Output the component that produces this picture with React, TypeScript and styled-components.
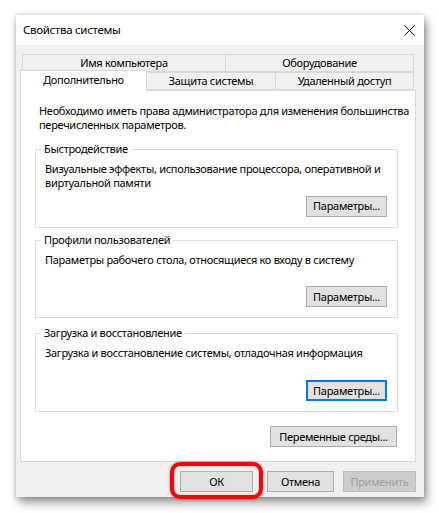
import React from "react";
import styled, { createGlobalStyle } from "styled-components";

const GlobalStyle = createGlobalStyle`
  * {
    box-sizing: border-box;
    margin: 0;
    padding: 0;
  }
  body {
    background: #ffffff;
    font-family: "Noto Sans", "Open Sans", sans-serif;
    font-size: 11px;
    letter-spacing: -0.3px;
    color: #000000;
  }
`;

const Page = styled.div`
  padding: 15px 15px 16px 16px;
`;

const Window = styled.div`
  width: 408px;
  height: 482px;
  background: #f0f0f0;
  box-shadow: 0 0 5px rgba(0, 0, 0, 0.22), 3px 6px 9px rgba(0, 0, 0, 0.38);
  display: flex;
  flex-direction: column;
`;

const TitleBar = styled.div`
  height: 30px;
  background: #ffffff;
  display: flex;
  align-items: center;
  justify-content: space-between;
  padding: 0 9px 0 7px;
`;

const Title = styled.span`
  font-size: 11.5px;
  line-height: 14px;
`;

const CloseIcon = () => (
  <svg width="11" height="11" viewBox="0 0 11 11">
    <path d="M0.5 0.5 L10.5 10.5 M10.5 0.5 L0.5 10.5" stroke="#000" strokeWidth="1" />
  </svg>
);

const Body = styled.div`
  flex: 1;
  padding: 9px 8px 0 4px;
  display: flex;
  flex-direction: column;
`;

const TopTabRow = styled.div`
  margin: 0 2px;
  height: 19px;
  display: grid;
  grid-template-columns: 204px 1fr;
`;

const BottomTabRow = styled.div`
  height: 17px;
  display: flex;
  align-items: flex-end;
`;

const Tab = styled.div<{ $active?: boolean; $width?: number }>`
  display: flex;
  align-items: center;
  justify-content: center;
  border: 1px solid #d9d9d9;
  line-height: 14px;
  white-space: nowrap;
  background: ${(p) => (p.$active ? "#ffffff" : "#f0f0f0")};
  width: ${(p) => (p.$width ? `${p.$width}px` : "auto")};
  height: ${(p) => (p.$active ? "21px" : "18px")};
  margin-bottom: ${(p) => (p.$active ? "-1px" : "0")};
  border-bottom: ${(p) => (p.$active ? "none" : "1px solid #d9d9d9")};
  padding-bottom: ${(p) => (p.$active ? "2px" : "0")};
  position: relative;
  z-index: ${(p) => (p.$active ? 1 : 0)};
  & + & {
    border-left: none;
  }
`;

const Panel = styled.div`
  height: 372px;
  background: #ffffff;
  border: 1px solid #d9d9d9;
  padding: 13px 17px 14px 14px;
  display: flex;
  flex-direction: column;
`;

const Intro = styled.p`
  line-height: 14px;
  margin-left: 4px;
  white-space: nowrap;
`;

const Group = styled.div<{ $gap: number }>`
  position: relative;
  height: 79px;
  margin-top: ${(p) => p.$gap}px;
  border: 1px solid #dcdcdc;
  padding: 12px 10px 10px 9px;
  display: flex;
  flex-direction: column;
`;

const Legend = styled.span`
  position: absolute;
  top: -8px;
  left: 5px;
  padding: 0 3px;
  background: #ffffff;
  line-height: 14px;
  white-space: nowrap;
`;

const GroupText = styled.p`
  line-height: 13.5px;
  white-space: nowrap;
`;

const Button = styled.button<{ $width: number; $focused?: boolean; $disabled?: boolean }>`
  width: ${(p) => p.$width}px;
  height: 21px;
  font-family: inherit;
  font-size: 11px;
  letter-spacing: inherit;
  line-height: 14px;
  background: ${(p) => (p.$disabled ? "#cccccc" : "#e1e1e1")};
  color: ${(p) => (p.$disabled ? "#a0a0a0" : "#000000")};
  border: ${(p) =>
    p.$focused ? "2px solid #0078d7" : p.$disabled ? "1px solid #bfbfbf" : "1px solid #adadad"};
  white-space: nowrap;
  padding: 0;
`;

const GroupButton = styled(Button)`
  margin-top: auto;
  align-self: flex-end;
`;

const EnvButton = styled(Button)`
  margin-top: 14px;
  align-self: flex-end;
  margin-right: 1px;
`;

const Footer = styled.div`
  flex: 1;
  display: flex;
  justify-content: flex-end;
  align-items: flex-start;
  padding-top: 9px;
`;

const Highlight = styled.span`
  position: relative;
  display: inline-flex;
  margin-right: 14px;
  &::after {
    content: "";
    position: absolute;
    left: -10px;
    right: -10px;
    top: -9px;
    bottom: -7px;
    border: 4px solid #ff0000;
    border-radius: 10px;
    box-shadow: 0 0 3px rgba(0, 0, 0, 0.45), inset 0 0 2px rgba(0, 0, 0, 0.3);
  }
`;

const CancelButton = styled(Button)`
  margin-right: 9px;
`;

export default function App() {
  return (
    <>
      <GlobalStyle />
      <Page>
        <Window>
          <TitleBar>
            <Title>Свойства системы</Title>
            <CloseIcon />
          </TitleBar>
          <Body>
            <TopTabRow>
              <Tab>Имя компьютера</Tab>
              <Tab>Оборудование</Tab>
            </TopTabRow>
            <BottomTabRow>
              <Tab $active $width={127}>Дополнительно</Tab>
              <Tab $width={129}>Защита системы</Tab>
              <Tab $width={138}>Удаленный доступ</Tab>
            </BottomTabRow>
            <Panel>
              <Intro>
                Необходимо иметь права администратора для изменения большинства
                <br />
                перечисленных параметров.
              </Intro>
              <Group $gap={17}>
                <Legend>Быстродействие</Legend>
                <GroupText>
                  Визуальные эффекты, использование процессора, оперативной и
                  <br />
                  виртуальной памяти
                </GroupText>
                <GroupButton $width={81}>Параметры...</GroupButton>
              </Group>
              <Group $gap={12}>
                <Legend>Профили пользователей</Legend>
                <GroupText>Параметры рабочего стола, относящиеся ко входу в систему</GroupText>
                <GroupButton $width={81}>Параметры...</GroupButton>
              </Group>
              <Group $gap={15}>
                <Legend>Загрузка и восстановление</Legend>
                <GroupText>Загрузка и восстановление системы, отладочная информация</GroupText>
                <GroupButton $width={81} $focused>
                  Параметры...
                </GroupButton>
              </Group>
              <EnvButton $width={127}>Переменные среды...</EnvButton>
            </Panel>
            <Footer>
              <Highlight>
                <Button $width={73}>ОК</Button>
              </Highlight>
              <CancelButton $width={67}>Отмена</CancelButton>
              <Button $width={73} $disabled>
                Применить
              </Button>
            </Footer>
          </Body>
        </Window>
      </Page>
    </>
  );
}
